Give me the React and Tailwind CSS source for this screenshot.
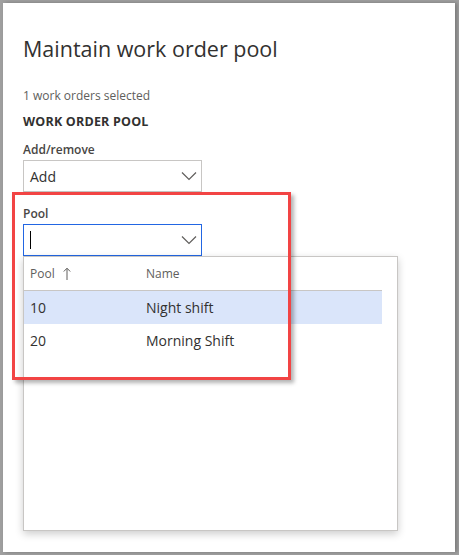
const font = { fontFamily: '"Open Sans", "Noto Sans", Arial, sans-serif' };

function Chevron() {
  return (
    <svg width="16" height="10" viewBox="0 0 16 10" className="shrink-0">
      <path d="M1 1.5 L8 8.5 L15 1.5" fill="none" stroke="#605e5c" strokeWidth="1.2" />
    </svg>
  );
}

export default function App() {
  const rows = [
    { pool: "10", name: "Night shift", selected: true },
    { pool: "20", name: "Morning Shift", selected: false },
  ];

  return (
    <div className="h-[555px] w-[459px] bg-[#a0a0a0] p-[3px] pr-[4px]" style={font}>
      <div className="relative h-full w-full bg-white shadow-[2px_0_4px_rgba(0,0,0,0.25)]">
        <div className="px-[20px] pt-[32px]">
          <h1 className="text-[21.5px] leading-[28px] text-[#323130]">Maintain work order pool</h1>
          <p className="mt-[25px] text-[12px] leading-[16px] text-[#605e5c]">1 work orders selected</p>
          <p className="mt-[10px] text-[12.5px] font-bold leading-[16px] tracking-[0.2px] text-[#323130]">WORK ORDER POOL</p>

          <label className="mt-[12px] block text-[12px] font-semibold leading-[16px] text-[#484644]">Add/remove</label>
          <div className="mt-[2px] flex h-[32px] w-[179px] items-center justify-between border border-[#c8c6c4] pl-[6px] pr-[4px]">
            <span className="text-[14px] text-[#323130]">Add</span>
            <Chevron />
          </div>

          <label className="mt-[14px] block text-[12px] font-semibold leading-[16px] text-[#484644]">Pool</label>
          <div className="mt-[2px] flex h-[32px] w-[179px] items-center justify-between border border-[#2266e3] pl-[6px] pr-[4px]">
            <span className="h-[18px] w-px bg-black" />
            <Chevron />
          </div>

          <div className="h-[275px] w-[375px] border border-[#c8c6c4] bg-white shadow-[0_3px_8px_rgba(0,0,0,0.2)]">
            <div className="mr-[15px]">
              <div className="flex h-[34px] items-center border-b border-[#c8c6c4] text-[12px] text-[#605e5c]">
                <span className="flex w-[122px] items-center gap-[8px] pl-[6px]">
                  Pool
                  <svg width="8" height="14" viewBox="0 0 8 14">
                    <path d="M4 13 V1.5 M0.8 4.5 L4 1.2 L7.2 4.5" fill="none" stroke="#605e5c" strokeWidth="1" />
                  </svg>
                </span>
                <span>Name</span>
              </div>
              {rows.map((r) => (
                <div
                  key={r.pool}
                  className={`flex h-[33px] items-center text-[14px] text-[#323130] ${r.selected ? "bg-[#dae5fa]" : ""}`}
                >
                  <span className="w-[122px] pl-[6px]">{r.pool}</span>
                  <span>{r.name}</span>
                </div>
              ))}
            </div>
          </div>
        </div>

        <div className="absolute left-[9px] top-[189px] h-[188px] w-[279px] border-[3px] border-[#f24444] shadow-[3px_3px_4px_rgba(0,0,0,0.3)]" />
      </div>
    </div>
  );
}
